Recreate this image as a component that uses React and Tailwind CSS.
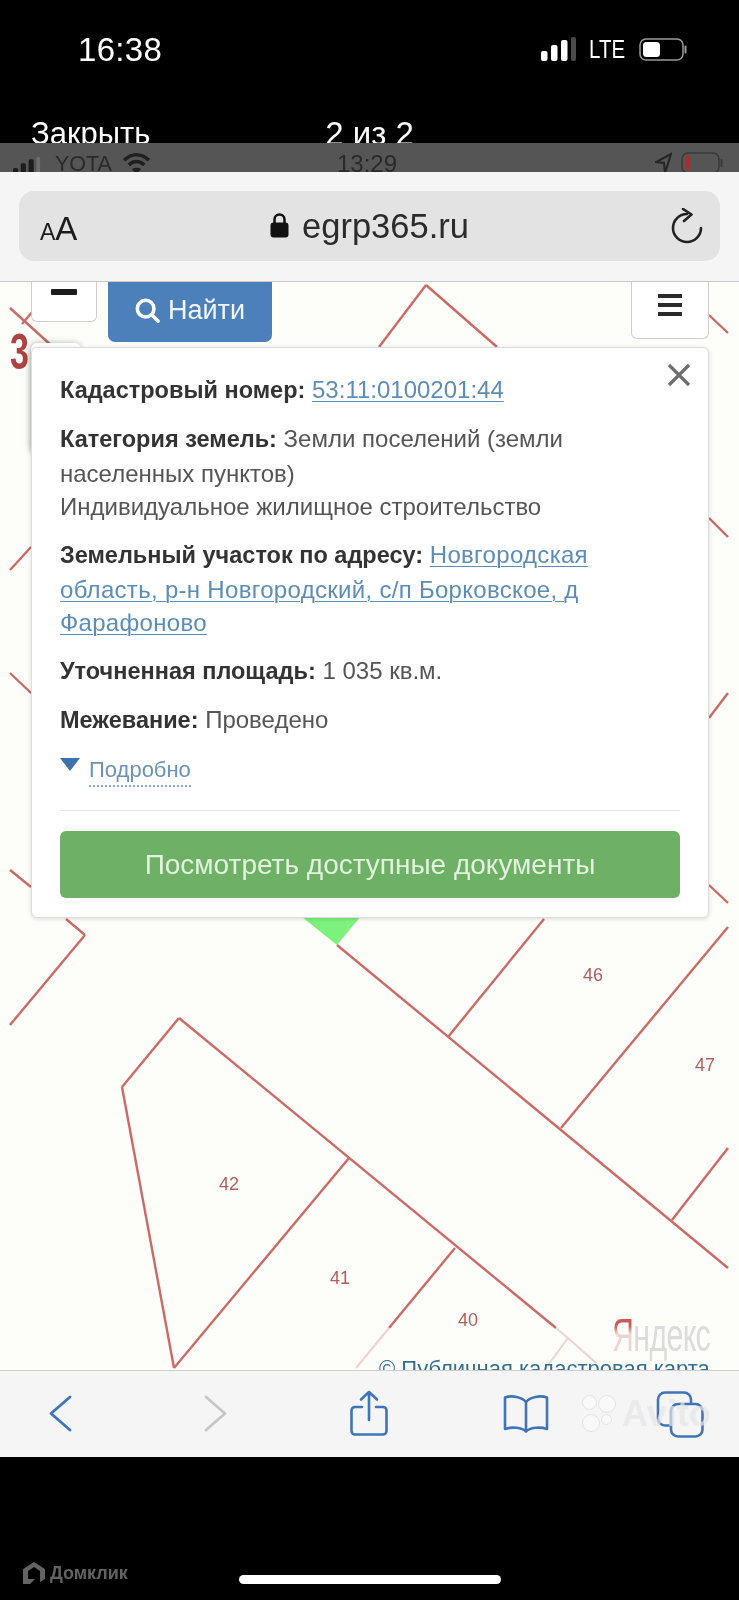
const FONT = "font-['Liberation_Sans',Arial,sans-serif]";

const lines = [
  [426,285,497,347],[426,285,379,347],[10,308,52,346],[33,311,22,324],[709,315,728,333],
  [709,518,728,537],[31,547,10,570],[10,673,31,693],[728,693,709,718],[10,870,31,887],[709,885,728,903],
  [66,919,85,935],[85,935,10,1025],[544,919,448,1037],[728,927,561,1128],[728,1148,672,1220],
  [337,945,728,1268],[179,1018,122,1087],[122,1087,174,1368],[174,1368,349,1158],[179,1018,556,1328],
  [455,1248,389,1328],
];
const faded = [[389,1328,356,1368],[556,1328,568,1338],[568,1338,546,1368],[568,1338,596,1363]];

function MapLines() {
  return (
    <svg className="absolute inset-0 w-full h-full" viewBox="0 282 739 1088" fill="none">
      {lines.map((l, i) => (
        <line key={i} x1={l[0]} y1={l[1]} x2={l[2]} y2={l[3]} stroke="#cb6a66" strokeWidth="2.4" />
      ))}
      {faded.map((l, i) => (
        <line key={i} x1={l[0]} y1={l[1]} x2={l[2]} y2={l[3]} stroke="#f0d2d0" strokeWidth="2" />
      ))}
      <polygon points="302,917 360,917 337,945" fill="#7cf27c" />
    </svg>
  );
}

function Signal({ color, dim }) {
  return (
    <svg width="35" height="24" viewBox="0 0 35 24">
      <rect x="0" y="14" width="6.5" height="10" rx="2" fill={color} />
      <rect x="10" y="8" width="6.5" height="16" rx="2" fill={color} />
      <rect x="20" y="3" width="6.5" height="21" rx="2" fill={color} />
      <rect x="30" y="0" width="5" height="24" rx="2" fill={dim} />
    </svg>
  );
}

function Battery({ w, h, border, fill, fillW }) {
  return (
    <svg width={w} height={h} viewBox={`0 0 ${w} ${h}`}>
      <rect x="1" y="1" width={w - 5} height={h - 2} rx="6" fill="none" stroke={border} strokeWidth="1.5" />
      <rect x="4" y="4" width={fillW} height={h - 8} rx="3.5" fill={fill} />
      <rect x={w - 2.5} y={h / 2 - 4} width="2" height="8" rx="1" fill={border} />
    </svg>
  );
}

function MapLabel({ className, children }) {
  return <span className={`absolute text-[18px] leading-none text-[#b0605c] ${className}`}>{children}</span>;
}

function Paragraph({ children }) {
  return <p className="leading-[33.5px] whitespace-nowrap mb-[14.5px]">{children}</p>;
}

function B({ children }) {
  return <b className="font-bold text-[23.5px] text-[#333333]">{children}</b>;
}

function A({ className = "", children }) {
  return <span className={`text-[#5d8db6] underline decoration-1 underline-offset-[3px] ${className}`}>{children}</span>;
}

export default function App() {
  return (
    <div className={`w-[739px] h-[1600px] bg-black overflow-hidden flex flex-col blur-[0.4px] ${FONT}`}>
      <div className="h-[143px] overflow-hidden text-white shrink-0">
        <div className="flex items-center pt-[28px] pl-[78px] pr-[52px] h-[70px]">
          <span className="text-[33px] leading-none tracking-[0.3px]">16:38</span>
          <div className="ml-auto flex items-center">
            <Signal color="#ffffff" dim="#4a4a4a" />
            <span className="ml-[13px] w-[37px] text-[25px] leading-none scale-x-[0.82] origin-left">LTE</span>
            <span className="ml-[13px] flex">
              <Battery w={48} h={23} border="#9a9a9a" fill="#ffffff" fillW={17} />
            </span>
          </div>
        </div>
        <div className="relative flex justify-center pt-[48px] text-[33px] leading-[32px]">
          <span className="absolute left-[31px] text-[31px]">Закрыть</span>
          <span>2 из 2</span>
        </div>
      </div>

      <div className="h-[29px] bg-[#555555] shrink-0 overflow-hidden relative flex items-start text-[#2a2a2a] text-[24px] leading-[24px] pt-[9px]">
        <span className="ml-[13px] mt-[5px] flex scale-[0.78] origin-top-left w-[43px]">
          <Signal color="#1c1c1c" dim="#6e6e6e" />
        </span>
        <span className="text-[21.5px] ml-[-1px]">YOTA</span>
        <svg className="ml-[9px] mt-[1px]" width="31" height="22" viewBox="0 0 31 24" fill="none" stroke="#1f1f1f" strokeWidth="3.8">
          <path d="M2 8 C10 0 21 0 29 8" />
          <path d="M7 13 C12 8 19 8 24 13" />
          <path d="M15.5 23 L10.5 17.5 C13.5 15.5 17.5 15.5 20.5 17.5 Z" fill="#1f1f1f" stroke="none" />
        </svg>
        <span className="absolute left-[337px]">13:29</span>
        <div className="absolute left-[655px] top-[9px] flex items-start gap-[9px]">
          <svg width="17" height="22" viewBox="0 0 17 22" fill="none" stroke="#262626" strokeWidth="2">
            <path d="M16 2 L1 10 L9 11 L10 21 Z" />
          </svg>
          <Battery w={42} h={22} border="#3a3a3a" fill="#b22a2a" fillW={5} />
        </div>
      </div>

      <div className="h-[110px] bg-[#f5f5f5] shrink-0 px-[19px] pt-[19px] border-b border-[#c9c9c9]">
        <div className="h-[70px] rounded-[15px] bg-[#e3e3e3] relative flex items-center justify-center">
          <span className="absolute left-[21px] top-[21px] flex items-baseline text-[#1c1c1c] leading-none">
            <span className="text-[23px]">A</span>
            <span className="text-[33px]">A</span>
          </span>
          <svg className="mr-[13px] mb-[2px]" width="19" height="26" viewBox="0 0 19 26" fill="none">
            <path d="M4.5 12 V7.5 a5 5 0 0 1 10 0 V12" stroke="#111111" strokeWidth="2.5" />
            <rect x="0.5" y="10.5" width="18" height="15" rx="3" fill="#111111" />
          </svg>
          <span className="text-[34.5px] leading-none text-[#2b2b2b]">egrp365.ru</span>
          <svg className="absolute left-[652px] top-[17px]" width="32" height="36" viewBox="0 0 32 36" fill="none" stroke="#222222" strokeWidth="2.6" strokeLinecap="round" strokeLinejoin="round">
            <path d="M16 6 A14 14 0 1 0 30 20" />
            <path d="M12 1 L20.5 6.5 L13 13" />
          </svg>
        </div>
      </div>

      <div className="h-[1088px] bg-[#fdfdf9] relative overflow-hidden shrink-0">
        <MapLines />
        <span className="absolute left-[10px] top-[45px] text-[50px] leading-none font-bold text-[#ad4343] scale-x-[0.68] origin-left">3</span>

        <MapLabel className="left-[583px] top-[684px]">46</MapLabel>
        <MapLabel className="left-[695px] top-[774px]">47</MapLabel>
        <MapLabel className="left-[219px] top-[893px]">42</MapLabel>
        <MapLabel className="left-[330px] top-[987px]">41</MapLabel>
        <MapLabel className="left-[458px] top-[1029px]">40</MapLabel>

        <div className="absolute left-[31px] top-0 w-[66px] h-[40px] bg-white border border-t-0 border-[#cfcfcf] rounded-b-[6px] flex justify-center">
          <div className="w-[26px] h-[6px] bg-[#1c1c1c] mt-[7px] rounded-[1px]" />
        </div>
        <div className="absolute left-[108px] top-0 w-[164px] h-[60px] bg-[#4b80ba] rounded-b-[7px] flex items-center justify-center gap-[8px] text-[#f4f7fb] text-[27px] pb-[3px]">
          <svg width="25" height="25" viewBox="0 0 27 27" fill="none" stroke="#ffffff" strokeWidth="3.8">
            <circle cx="11.5" cy="11.5" r="9" />
            <path d="M18 18 L25 25" strokeLinecap="round" />
          </svg>
          <span>Найти</span>
        </div>
        <div className="absolute left-[631px] top-0 w-[78px] h-[57px] bg-white border border-t-0 border-[#cfcfcf] rounded-b-[6px] flex flex-col items-center pt-[12px] gap-[5px]">
          <div className="w-[24px] h-[4px] bg-[#2b2b2b]" />
          <div className="w-[24px] h-[4px] bg-[#2b2b2b]" />
          <div className="w-[24px] h-[4px] bg-[#2b2b2b]" />
        </div>

        <div className="absolute left-[31px] top-[61px] w-[50px] h-[110px] bg-white rounded-[6px] shadow-[-1px_0_6px_rgba(0,0,0,0.3)]" />

        <div className="absolute left-[31px] top-[65px] w-[678px] h-[571px] bg-white rounded-[6px] border border-[#dedede] shadow-[0_1px_4px_rgba(0,0,0,0.15)] pl-[28px] pr-[28px] pt-[25px] text-[24px] text-[#555555]">
          <svg className="absolute right-[17px] top-[15px]" width="24" height="24" viewBox="0 0 24 24" stroke="#6e6e6e" strokeWidth="3.2">
            <path d="M2 2 L22 22 M22 2 L2 22" />
          </svg>
          <Paragraph><B>Кадастровый номер:</B> <A>53:11:0100201:44</A></Paragraph>
          <Paragraph>
            <B>Категория земель:</B> Земли поселений (земли<br />населенных пунктов)<br />Индивидуальное жилищное строительство
          </Paragraph>
          <Paragraph>
            <B>Земельный участок по адресу:</B> <A className="tracking-[0.3px]">Новгородская<br />область, р-н Новгородский, с/п Борковское, д<br />Фарафоново</A>
          </Paragraph>
          <Paragraph><B>Уточненная площадь:</B> 1 035 кв.м.</Paragraph>
          <Paragraph><B>Межевание:</B> Проведено</Paragraph>
          <div className="flex items-start mt-[17.5px] h-[34px] text-[22px]">
            <svg className="mt-[3px] mr-[9px]" width="20" height="14" viewBox="0 0 20 14">
              <polygon points="0,0 20,0 10,13" fill="#3f72ad" />
            </svg>
            <span className="text-[#6d93b4] border-b-2 border-dotted border-[#8aa8c4] leading-[30px]">Подробно</span>
          </div>
          <div className="h-px bg-[#e6e6e6] mt-[21px]" />
          <div className="mt-[20px] h-[67px] rounded-[6px] bg-[#6eb066] flex items-center justify-center text-[28px] text-[#e2f3dd]">
            Посмотреть доступные документы
          </div>
        </div>

        <div className="absolute left-[612px] top-[1030px] text-[46px] leading-[46px] tracking-[-1px] flex scale-x-[0.66] origin-left whitespace-nowrap">
          <span className="bg-linear-to-b from-[#cf5a55] from-[30%] to-[#ecd6d4] to-[48%] bg-clip-text text-transparent">Я</span>
          <span className="text-[#dcdcdc]">ндекс</span>
        </div>
        <div className="absolute left-[379px] top-[1074px] text-[22px] leading-[26px] text-[#33708f] whitespace-nowrap">
          © Публичная кадастровая карта
        </div>
      </div>

      <div className="h-[87px] bg-[#f5f5f5] border-t border-[#cfcfcf] shrink-0 relative flex items-start">
        <svg className="ml-[49px] mt-[24px]" width="23" height="37" viewBox="0 0 23 37" fill="none" stroke="#3f74b8" strokeWidth="2.8" strokeLinecap="round" strokeLinejoin="round">
          <path d="M21 2 L2 18.5 L21 35" />
        </svg>
        <svg className="ml-[132px] mt-[24px]" width="23" height="37" viewBox="0 0 23 37" fill="none" stroke="#c7c7c7" strokeWidth="2.8" strokeLinecap="round" strokeLinejoin="round">
          <path d="M2 2 L21 18.5 L2 35" />
        </svg>
        <svg className="ml-[123px] mt-[19px]" width="38" height="47" viewBox="0 0 38 47" fill="none" stroke="#3f74b8" strokeWidth="2.6" strokeLinecap="round" strokeLinejoin="round">
          <path d="M12 17 H5 a3.5 3.5 0 0 0 -3.5 3.5 V41 a3.5 3.5 0 0 0 3.5 3.5 H33 a3.5 3.5 0 0 0 3.5 -3.5 V20.5 a3.5 3.5 0 0 0 -3.5 -3.5 H26" />
          <path d="M19 30 V2 M11 9.5 L19 2 L27 9.5" />
        </svg>
        <svg className="absolute left-[503px] top-[24px]" width="46" height="38" viewBox="0 0 46 38" fill="none" stroke="#3f74b8" strokeWidth="2.6" strokeLinejoin="round">
          <path d="M23 7 C19 2 9 0 2 2.5 V34 C9 31.5 19 32.5 23 36.5 C27 32.5 37 31.5 44 34 V2.5 C37 0 27 2 23 7 Z" />
          <path d="M23 7 V36" />
        </svg>
        <svg className="absolute left-[656px] top-[20px]" width="48" height="47" viewBox="0 0 48 47" fill="none" stroke="#3f74b8" strokeWidth="2.6">
          <rect x="2" y="1.5" width="33" height="33" rx="7" />
          <rect x="15" y="13" width="31.5" height="32.5" rx="7" fill="#f5f5f5" />
        </svg>
        <div className="absolute left-[582px] top-[24px] flex items-center opacity-70">
          <div className="flex flex-wrap w-[38px] gap-[1px]">
            <span className="w-[15px] h-[15px] rounded-full bg-[#fbfbfb] border border-[#dcdcdc]" />
            <span className="w-[18px] h-[18px] rounded-full bg-[#fbfbfb] border border-[#dcdcdc]" />
            <span className="w-[18px] h-[18px] rounded-full bg-[#fbfbfb] border border-[#dcdcdc]" />
            <span className="w-[11px] h-[11px] rounded-full bg-[#fbfbfb] border border-[#dcdcdc]" />
          </div>
          <span className="ml-[2px] text-[36px] leading-none text-[#e6e6e6] font-bold">Avito</span>
        </div>
      </div>

      <div className="flex-1 relative">
        <div className="absolute left-[23px] top-[105px] flex items-center gap-[5px]">
          <svg width="22" height="22" viewBox="0 0 22 22" fill="#636363">
            <path d="M11 0 L22 7 V17 L17 20 V9 L11 5 L5 9 V17 H12 L7 22 H0 V7 Z" />
          </svg>
          <span className="text-[18px] font-bold leading-none text-[#636363]">Домклик</span>
        </div>
        <div className="absolute left-[239px] top-[118px] w-[262px] h-[9px] rounded-full bg-white" />
      </div>
    </div>
  );
}
